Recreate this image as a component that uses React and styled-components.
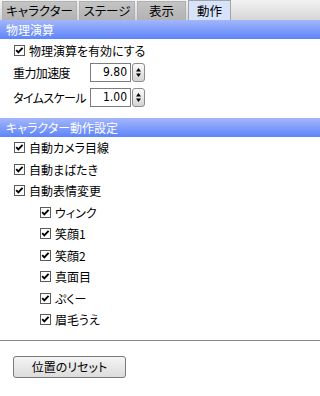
import React from "react";
import styled, { createGlobalStyle } from "styled-components";

const Global = createGlobalStyle`
  html, body { margin: 0; padding: 0; background: #fff; }
  body {
    font-family: "Noto Sans CJK JP", "Noto Sans", sans-serif;
    font-size: 12px;
    font-feature-settings: "palt";
    color: #000;
  }
`;

const Page = styled.div`
  width: 320px;
  height: 396px;
  overflow: hidden;
  background: #fff;
`;

const TabBar = styled.div`
  height: 20px;
  display: flex;
  align-items: flex-end;
  gap: 2px;
  padding-left: 2px;
  background: linear-gradient(#f2f2f2, #d6d6d6);
`;

const Tab = styled.div`
  box-sizing: border-box;
  height: ${(p) => (p.$active ? 20 : 19)}px;
  width: ${(p) => p.$w}px;
  display: flex;
  align-items: center;
  justify-content: center;
  border: 1px solid ${(p) => (p.$active ? "#a4a4a4" : "#b0b0b0")};
  border-bottom: none;
  background: ${(p) =>
    p.$active ? "#d6e3fb" : "linear-gradient(#c4c4c4, #b2b2b2)"};
  font-size: 12.5px;
  line-height: 1;
  padding-top: 1px;
`;

const Header = styled.div`
  height: 19px;
  line-height: 19px;
  padding-left: 6px;
  color: #fff;
  background: linear-gradient(#a3b6fb, #5d84f9);
`;

const Section = styled.div`
  display: flex;
  flex-direction: column;
  padding-bottom: ${(p) => p.$pb || 0}px;
`;

const CheckRow = styled.div`
  height: ${(p) => p.$h || 21.5}px;
  display: flex;
  align-items: center;
  gap: 4px;
  padding-left: ${(p) => (p.$indent ? 40 : 14)}px;
`;

const FieldRow = styled.div`
  height: 19px;
  display: flex;
  align-items: center;
  padding-left: 13px;
  margin-top: ${(p) => p.$mt || 0}px;
`;

const FieldLabel = styled.span`
  width: 77px;
  flex-shrink: 0;
  white-space: nowrap;
  letter-spacing: -0.6px;
`;

const NumBox = styled.div`
  box-sizing: border-box;
  width: 41px;
  height: 19px;
  flex-shrink: 0;
  border: 1px solid #7d7d7d;
  background: #fff;
  text-align: right;
  padding-right: 3px;
  font-family: "Liberation Sans Narrow", "DejaVu Sans Condensed", "Liberation Sans", sans-serif;
  font-stretch: condensed;
  font-size: 12px;
  line-height: 17px;
`;

const Spin = styled.div`
  box-sizing: border-box;
  margin-left: 1px;
  width: 13px;
  height: 19px;
  flex-shrink: 0;
  border: 1px solid #8c8c8c;
  border-radius: 3px;
  background: linear-gradient(#fbfbfb, #d4d4d4);
  display: flex;
  align-items: center;
  justify-content: center;
`;

const Divider = styled.div`
  height: 1px;
  background: #8a8a8a;
  margin-top: 9px;
`;

const ButtonArea = styled.div`
  padding: 15px 0 0 13px;
`;

const Button = styled.button`
  box-sizing: border-box;
  width: 113px;
  height: 22px;
  border: 1px solid #7a7a7a;
  border-radius: 3px;
  background: linear-gradient(#f4f4f4, #dcdcdc);
  font-family: inherit;
  font-size: 12px;
  font-feature-settings: "palt";
  color: #000;
  padding: 0;
`;

const Check = () => (
  <svg width="11" height="11" viewBox="0 0 11 11">
    <rect x="0.5" y="0.5" width="10" height="10" fill="#fff" stroke="#5a5a5a" />
    <path d="M2.2 5.2 L4.3 7.4 L8.6 2.8" fill="none" stroke="#000" strokeWidth="1.9" />
  </svg>
);

const Arrows = () => (
  <svg width="7" height="11" viewBox="0 0 7 11">
    <path d="M3.5 1 L6 4.5 L1 4.5 Z" fill="#000" />
    <path d="M3.5 10 L6 6.5 L1 6.5 Z" fill="#000" />
  </svg>
);

const Item = ({ label, indent, h }) => (
  <CheckRow $indent={indent} $h={h}>
    <Check />
    <span>{label}</span>
  </CheckRow>
);

const Field = ({ label, value, mt }) => (
  <FieldRow $mt={mt}>
    <FieldLabel>{label}</FieldLabel>
    <NumBox>{value}</NumBox>
    <Spin>
      <Arrows />
    </Spin>
  </FieldRow>
);

export default function App() {
  return (
    <Page>
      <Global />
      <TabBar>
        <Tab $w={75}>キャラクター</Tab>
        <Tab $w={56}>ステージ</Tab>
        <Tab $w={49}>表示</Tab>
        <Tab $w={43} $active>動作</Tab>
      </TabBar>
      <Header>物理演算</Header>
      <Section $pb={11}>
        <Item label="物理演算を有効にする" h={22} />
        <Field label="重力加速度" value="9.80" mt={2} />
        <Field label="タイムスケール" value="1.00" mt={6} />
      </Section>
      <Header>キャラクター動作設定</Header>
      <Section>
        <Item label="自動カメラ目線" />
        <Item label="自動まばたき" />
        <Item label="自動表情変更" />
        <Item label="ウィンク" indent />
        <Item label="笑顔1" indent />
        <Item label="笑顔2" indent />
        <Item label="真面目" indent />
        <Item label="ぷくー" indent />
        <Item label="眉毛うえ" indent />
      </Section>
      <Divider />
      <ButtonArea>
        <Button>位置のリセット</Button>
      </ButtonArea>
    </Page>
  );
}
